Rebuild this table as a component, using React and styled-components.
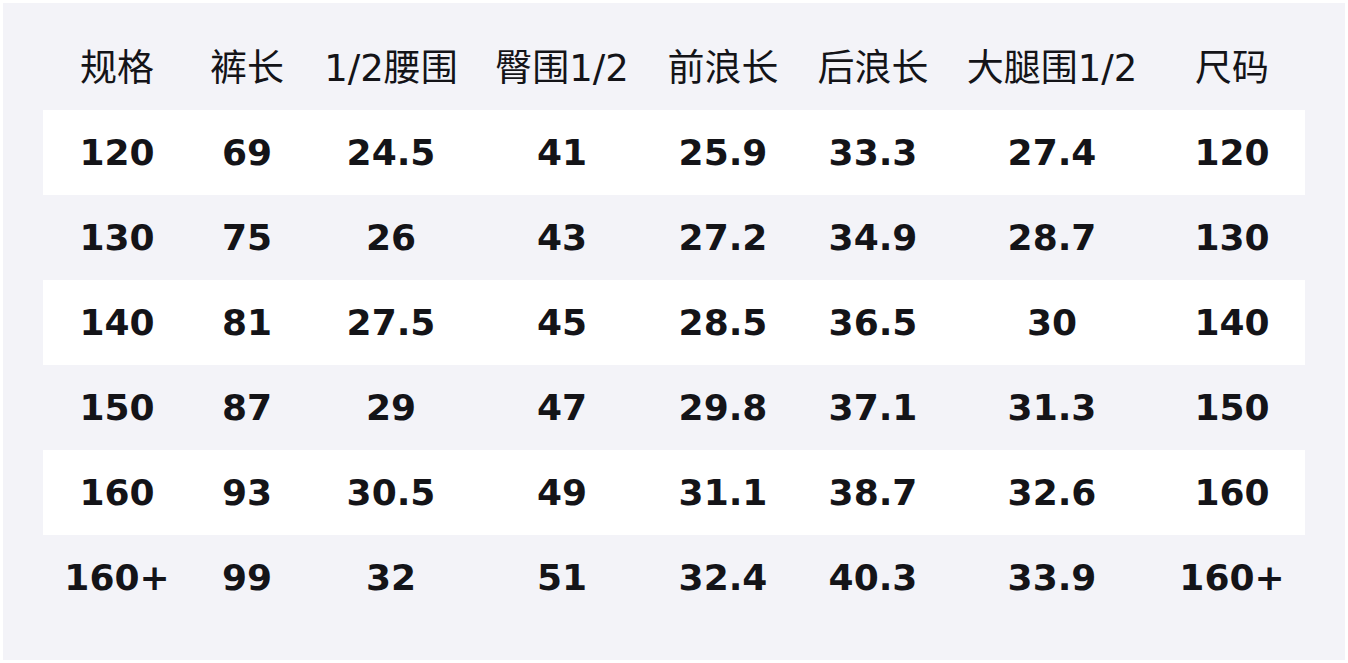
import React from 'react'
import styled, { createGlobalStyle } from 'styled-components'

const GlobalStyle = createGlobalStyle`
  html, body {
    margin: 0;
    padding: 0;
    background: #ffffff;
  }
`

const Frame = styled.div`
  width: 1348px;
  height: 663px;
  box-sizing: border-box;
  padding: 3px;
  background: #ffffff;
`

const Panel = styled.div`
  height: 100%;
  box-sizing: border-box;
  padding: 22px 40px 40px 40px;
  background: #f3f3f8;
`

const Table = styled.div`
  display: grid;
  grid-template-columns: 148px 112px 176px 166px 156px 144px 214px 146px;
  width: 1262px;
`

const Row = styled.div`
  display: contents;
`

const Cell = styled.div`
  height: 85px;
  box-sizing: border-box;
  padding-bottom: ${p => (p.$head ? '6px' : '0')};
  display: flex;
  align-items: center;
  justify-content: center;
  white-space: nowrap;
  color: #141418;
  background: ${p => (p.$stripe ? '#ffffff' : 'transparent')};
  font-family: "DejaVu Sans", "Noto Sans CJK SC", sans-serif;
  font-size: ${p => (p.$head ? '37px' : '36px')};
  font-weight: ${p => (p.$head ? 400 : 700)};
`

const headers = ['规格', '裤长', '1/2腰围', '臀围1/2', '前浪长', '后浪长', '大腿围1/2', '尺码']

const rows = [
  ['120', '69', '24.5', '41', '25.9', '33.3', '27.4', '120'],
  ['130', '75', '26', '43', '27.2', '34.9', '28.7', '130'],
  ['140', '81', '27.5', '45', '28.5', '36.5', '30', '140'],
  ['150', '87', '29', '47', '29.8', '37.1', '31.3', '150'],
  ['160', '93', '30.5', '49', '31.1', '38.7', '32.6', '160'],
  ['160+', '99', '32', '51', '32.4', '40.3', '33.9', '160+'],
]

function App() {
  return (
    <>
      <GlobalStyle />
      <Frame>
        <Panel>
          <Table>
            <Row>
              {headers.map(h => (
                <Cell key={h} $head>{h}</Cell>
              ))}
            </Row>
            {rows.map((r, i) => (
              <Row key={i}>
                {r.map((v, j) => (
                  <Cell key={j} $stripe={i % 2 === 0}>{v}</Cell>
                ))}
              </Row>
            ))}
          </Table>
        </Panel>
      </Frame>
    </>
  )
}

export default App
